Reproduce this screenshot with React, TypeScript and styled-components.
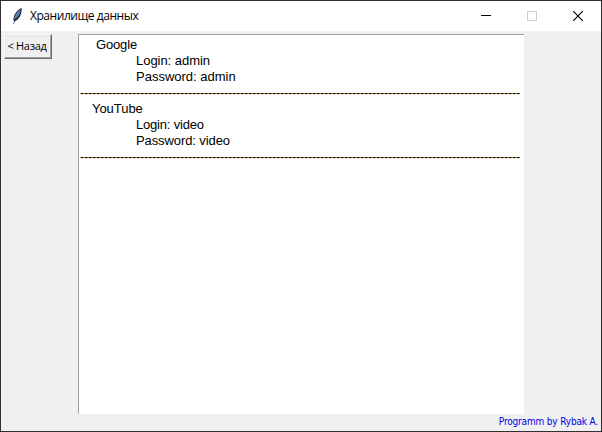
import React from "react";
import styled, { createGlobalStyle } from "styled-components";

const GlobalStyle = createGlobalStyle`
  * { box-sizing: border-box; }
  html, body { margin: 0; overflow: hidden; }
`;

const Window = styled.main`
  width: 602px;
  height: 432px;
  display: flex;
  flex-direction: column;
  background: #f0f0f0;
  border: 1px solid #303033;
  color: #000;
`;

const TitleBar = styled.header`
  height: 30px;
  flex: none;
  display: flex;
  align-items: center;
  background: #fff;
  padding-left: 8px;
`;

const Title = styled.h1`
  margin: 0 auto 0 5px;
  font: 400 12px/16px "Open Sans", "Noto Sans", sans-serif;
  letter-spacing: -0.45px;
  white-space: nowrap;
`;

const Caption = styled.button<{ $muted?: boolean }>`
  width: 46px;
  height: 30px;
  padding: 0;
  border: 0;
  background: none;
  display: grid;
  place-items: center;
  color: ${(p) => (p.$muted ? "#cccccc" : "#000")};
`;

const Body = styled.div`
  flex: 1;
  display: grid;
  grid-template-columns: 77px 446px 1fr;
  align-items: start;
`;

const BackButton = styled.button`
  width: 48px;
  height: 25px;
  margin: 3px 0 0 3px;
  padding: 0 2px 1px 0;
  border: 1px solid;
  border-color: #fff #696969 #696969 #fff;
  box-shadow: inset -1px -1px #a0a0a0, inset 1px 1px #e3e3e3;
  background: #f0f0f0;
  font: 400 11px/16px "Open Sans", "Noto Sans", sans-serif;
  letter-spacing: -0.33px;
  white-space: nowrap;
`;

const ListBox = styled.section`
  height: 380px;
  margin-top: 3px;
  padding: 2px 0 0 1px;
  background: #fff;
  border-top: 1px solid #a0a0a0;
  border-left: 1px solid #a0a0a0;
  overflow: hidden;
  font: 13px/16px "Liberation Sans", Arial, sans-serif;
`;

const Line = styled.div<{ $indent: number; $spacing?: number }>`
  height: 16px;
  padding-left: ${(p) => p.$indent}px;
  letter-spacing: ${(p) => p.$spacing ?? 0}px;
  white-space: pre;
`;

const Rule = styled(Line)`
  letter-spacing: -0.329px;
`;

const Footer = styled.footer`
  height: 17px;
  flex: none;
  padding-right: 3px;
  text-align: right;
  color: #0000e8;
  font: 10px/16px "DejaVu Sans Condensed", "DejaVu Sans", sans-serif;
  font-stretch: condensed;
  letter-spacing: -0.17px;
`;

const entries = [
  { name: "Google", indent: 16, nameSpacing: -0.15, login: "admin", password: "admin", loginSpacing: -0.04, passwordSpacing: 0 },
  { name: "YouTube", indent: 12, nameSpacing: -0.05, login: "video", password: "video", loginSpacing: -0.2, passwordSpacing: -0.1 },
];

const Feather = () => (
  <svg width="16" height="18" viewBox="0 0 16 18" aria-hidden="true">
    <path d="M12.6 1C8.8 2.3 5.2 6.6 4.3 12.2l.9 2.5C9.8 12.9 13.2 7.6 12.6 1Z" fill="#1b2838" />
    <path d="M11.7 2.3C8.6 4.3 6 8 5.2 12.5 8.9 10.8 11.6 6.6 11.7 2.3Z" fill="#72a4dc" />
    <path d="M11.2 3.6C9 7.2 6.2 11 4.5 16.8" fill="none" stroke="#263444" strokeWidth=".7" />
  </svg>
);

export default function App() {
  return (
    <>
      <GlobalStyle />
      <Window>
        <TitleBar>
          <Feather />
          <Title>Хранилище данных</Title>
          <Caption aria-label="Minimize">
            <svg width="10" height="10" shapeRendering="crispEdges"><path d="M0 4.5H10" stroke="currentColor" /></svg>
          </Caption>
          <Caption $muted aria-label="Maximize">
            <svg width="10" height="10" shapeRendering="crispEdges"><path d="M.5.5h9v9h-9z" fill="none" stroke="currentColor" /></svg>
          </Caption>
          <Caption aria-label="Close">
            <svg width="10" height="10"><path d="M0 0 10 10M10 0 0 10" stroke="currentColor" strokeWidth="1.15" /></svg>
          </Caption>
        </TitleBar>
        <Body>
          <BackButton>&lt; Назад</BackButton>
          <ListBox>
            {entries.map((e) => (
              <React.Fragment key={e.name}>
                <Line $indent={e.indent} $spacing={e.nameSpacing}>{e.name}</Line>
                <Line $indent={56} $spacing={e.loginSpacing}>Login: {e.login}</Line>
                <Line $indent={56} $spacing={e.passwordSpacing}>Password: {e.password}</Line>
                <Rule $indent={0}>{"-".repeat(110)}</Rule>
              </React.Fragment>
            ))}
          </ListBox>
        </Body>
        <Footer>Programm by Rybak A.</Footer>
      </Window>
    </>
  );
}
